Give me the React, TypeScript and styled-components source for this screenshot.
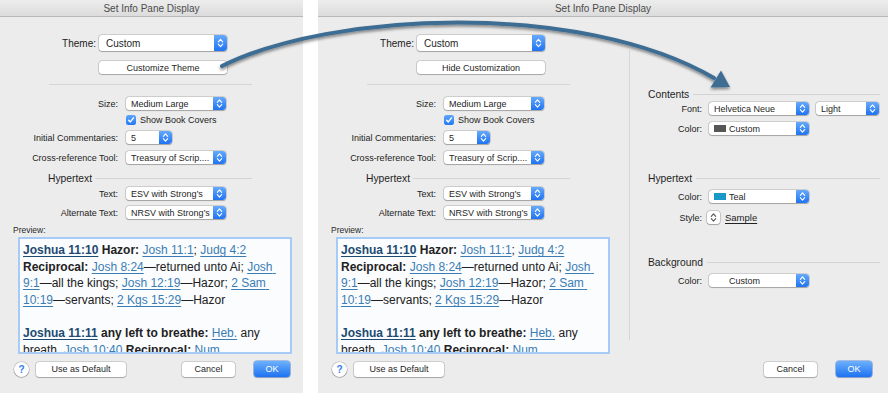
import React from 'react';
import styled, { createGlobalStyle } from 'styled-components';

const GlobalStyle = createGlobalStyle`
  html, body { margin: 0; padding: 0; background: #ffffff; }
  body { font-family: "Liberation Sans", Arial, sans-serif; }
  * { box-sizing: border-box; }
`;

const Page = styled.div`
  position: relative;
  width: 888px;
  height: 393px;
  overflow: hidden;
  display: flex;
  gap: 15px;
  background: #ffffff;
`;

const Window = styled.div<{ $w: number }>`
  width: ${(p) => p.$w}px;
  height: 393px;
  flex: none;
  background: #ececec;
  display: flex;
  flex-direction: column;
  color: #222;
`;

const TitleBar = styled.div`
  height: 17px;
  flex: none;
  border-bottom: 1px solid #b8b8b8;
  background: linear-gradient(#ededed, #dcdcdc);
  display: flex;
  align-items: center;
  justify-content: center;
  font-size: 10px;
  color: #4b4b4b;
`;

const Main = styled.div`
  display: flex;
  align-items: flex-start;
`;

const LeftColumn = styled.div`
  width: 293px;
  flex: none;
  padding-left: 13px;
  display: flex;
  flex-direction: column;
`;

const ThemeGrid = styled.div`
  display: grid;
  grid-template-columns: 83px 128px;
  column-gap: 3px;
  row-gap: 10px;
  margin-top: 18px;
  align-items: center;
`;

const ThemeLabel = styled.div`
  font-size: 10px;
  text-align: right;
  white-space: nowrap;
`;

const HSep = styled.div<{ $ml: number; $mr: number; $mt: number }>`
  height: 1px;
  background: #d6d6d6;
  margin: ${(p) => p.$mt}px ${(p) => p.$mr}px 0 ${(p) => p.$ml}px;
`;

const Row = styled.div<{ $mt: number; $h?: number }>`
  display: grid;
  grid-template-columns: 105px auto;
  column-gap: 8px;
  align-items: center;
  justify-items: start;
  height: ${(p) => p.$h ?? 13}px;
  margin-top: ${(p) => p.$mt}px;
`;

const Label = styled.div`
  font-size: 9px;
  text-align: right;
  white-space: nowrap;
  justify-self: end;
  color: #222;
`;

const PopupBox = styled.div<{ $w: number; $h: number; $fs: number; $pl: number }>`
  width: ${(p) => p.$w}px;
  height: ${(p) => p.$h}px;
  display: flex;
  align-items: center;
  background: #ffffff;
  border-radius: 3px;
  box-shadow: 0 0 0 0.6px rgba(0, 0, 0, 0.22), 0 0.8px 1px rgba(0, 0, 0, 0.22);
  font-size: ${(p) => p.$fs}px;
  padding-left: ${(p) => p.$pl}px;
  color: #262626;
  overflow: hidden;
`;

const PopupText = styled.span`
  flex: 1;
  white-space: nowrap;
  overflow: hidden;
`;

const Stepper = styled.div`
  width: 13px;
  height: 100%;
  flex: none;
  background: linear-gradient(#66aafc, #1f73f2);
  border-radius: 0 3px 3px 0;
  display: flex;
  align-items: center;
  justify-content: center;
`;

const Swatch = styled.span<{ $c: string }>`
  width: 12px;
  height: 7px;
  flex: none;
  background: ${(p) => p.$c};
  margin-right: 3px;
`;

const Chevrons = ({ h, color }: { h: number; color: string }) => {
  const m = h / 2;
  return (
    <svg width="9" height={h} viewBox={`0 0 9 ${h}`}>
      <path
        d={`M2.3 ${m - 1.2} L4.5 ${m - 3.6} L6.7 ${m - 1.2} M2.3 ${m + 1.2} L4.5 ${m + 3.6} L6.7 ${m + 1.2}`}
        fill="none"
        stroke={color}
        strokeWidth="1.1"
        strokeLinecap="round"
        strokeLinejoin="round"
      />
    </svg>
  );
};

const Popup = ({
  w,
  text,
  big,
  swatch,
}: {
  w: number;
  text: string;
  big?: boolean;
  swatch?: string;
}) => (
  <PopupBox $w={w} $h={big ? 16 : 13} $fs={big ? 10 : 9} $pl={big ? 7 : 5}>
    {swatch && <Swatch $c={swatch} />}
    <PopupText>{text}</PopupText>
    <Stepper>
      <Chevrons h={big ? 16 : 13} color="#ffffff" />
    </Stepper>
  </PopupBox>
);

const Button = styled.div<{ $w: number; $h?: number; $primary?: boolean; $ml?: number }>`
  width: ${(p) => p.$w}px;
  height: ${(p) => p.$h ?? 15}px;
  margin-left: ${(p) => p.$ml ?? 0}px;
  flex: none;
  display: flex;
  align-items: center;
  justify-content: center;
  border-radius: 3px;
  font-size: 9px;
  white-space: nowrap;
  background: ${(p) => (p.$primary ? 'linear-gradient(#6db1fc, #1e72f1)' : '#ffffff')};
  color: ${(p) => (p.$primary ? '#ffffff' : '#262626')};
  box-shadow: ${(p) =>
    p.$primary
      ? '0 0 0 0.6px rgba(20, 90, 210, 0.6), 0 0.8px 1px rgba(0,0,0,0.2)'
      : '0 0 0 0.6px rgba(0, 0, 0, 0.22), 0 0.8px 1px rgba(0, 0, 0, 0.2)'};
`;

const CheckWrap = styled.div`
  display: flex;
  align-items: center;
  gap: 4px;
  font-size: 9px;
  white-space: nowrap;
`;

const CheckBox = styled.span`
  width: 10px;
  height: 10px;
  border-radius: 2.5px;
  background: linear-gradient(#5fa6fb, #2479f3);
  display: flex;
  align-items: center;
  justify-content: center;
`;

const HeadingRow = styled.div<{ $mt: number; $pl: number; $mr: number; $gap: number }>`
  display: flex;
  align-items: center;
  height: 12px;
  margin-top: ${(p) => p.$mt}px;
  padding-left: ${(p) => p.$pl}px;
  margin-right: ${(p) => p.$mr}px;
  gap: ${(p) => p.$gap}px;
`;

const HeadingText = styled.span`
  font-size: 10.3px;
  color: #1e1e1e;
  white-space: nowrap;
`;

const HeadingLine = styled.span`
  flex: 1;
  height: 1px;
  background: #d4d4d4;
`;

const PreviewLabel = styled.div`
  font-size: 8.5px;
  height: 10px;
  line-height: 10px;
  margin-top: 6px;
  color: #2a2a2a;
`;

const PreviewBox = styled.div`
  width: 274px;
  height: 117px;
  margin: 2px 0 2px 5px;
  border: 2px solid #a7cbf7;
  background: #fbfcfe;
  padding: 3px 3px 0;
  overflow: hidden;
  font-family: "Liberation Sans", Arial, sans-serif;
  font-size: 12px;
  line-height: 16.7px;
  color: #202020;
`;

const PLine = styled.div`
  white-space: nowrap;
  height: 16.7px;
`;

const Ref = styled.span`
  color: #3a7cb4;
  text-decoration: underline;
  text-decoration-thickness: 1px;
  text-underline-offset: 2px;
`;

const HeadRef = styled.span`
  color: #1c4a72;
  font-weight: bold;
  text-decoration: underline;
  text-decoration-thickness: 1px;
  text-underline-offset: 2px;
`;

const B = styled.span`
  font-weight: bold;
  color: #222;
`;

const Footer = styled.div<{ $pr: number }>`
  display: flex;
  align-items: center;
  height: 16px;
  margin-top: 5px;
  padding: 0 ${(p) => p.$pr}px 0 14px;
`;

const Help = styled.div`
  width: 15px;
  height: 15px;
  border-radius: 50%;
  background: #ffffff;
  box-shadow: 0 0 0 0.6px rgba(0, 0, 0, 0.25), 0 0.8px 1px rgba(0, 0, 0, 0.2);
  display: flex;
  align-items: center;
  justify-content: center;
  color: #2f7ff1;
  font-size: 10px;
  font-weight: bold;
`;

const Spacer = styled.div`
  flex: 1;
`;

const VDivider = styled.div`
  width: 1px;
  height: 290px;
  margin: 33px 0 0 18px;
  background: #d6d6d6;
  flex: none;
`;

const RightPane = styled.div`
  flex: 1;
  padding: 71px 8px 0 18px;
  display: flex;
  flex-direction: column;
`;

const RRow = styled.div<{ $mt: number }>`
  display: flex;
  align-items: center;
  height: 13px;
  margin-top: ${(p) => p.$mt}px;
`;

const RLabel = styled.div`
  width: 54px;
  margin-right: 7px;
  font-size: 9px;
  text-align: right;
  white-space: nowrap;
  flex: none;
`;

const PopupGap = styled.span`
  width: 7px;
  flex: none;
`;

const SmallStepper = styled.div`
  width: 13px;
  height: 13px;
  margin-left: -2px;
  border-radius: 3px;
  background: #ffffff;
  box-shadow: 0 0 0 0.6px rgba(0, 0, 0, 0.25), 0 0.8px 1px rgba(0, 0, 0, 0.2);
  display: flex;
  align-items: center;
  justify-content: center;
`;

const SampleLink = styled.span`
  font-size: 9.5px;
  margin-left: 5px;
  color: #222;
  text-decoration: underline;
  text-underline-offset: 1.5px;
`;

const Overlay = styled.svg`
  position: absolute;
  left: 0;
  top: 0;
  pointer-events: none;
`;

const PreviewContent = () => (
  <PreviewBox>
    <PLine>
      <HeadRef>Joshua 11:10</HeadRef> <B>Hazor:</B> <Ref>Josh 11:1</Ref>; <Ref>Judg 4:2</Ref>
    </PLine>
    <PLine>
      <B>Reciprocal:</B> <Ref>Josh 8:24</Ref>—returned unto Ai; <Ref>Josh{'\u00a0'}</Ref>
    </PLine>
    <PLine>
      <Ref>9:1</Ref>—all the kings; <Ref>Josh 12:19</Ref>—Hazor; <Ref>2 Sam{'\u00a0'}</Ref>
    </PLine>
    <PLine>
      <Ref>10:19</Ref>—servants; <Ref>2 Kgs 15:29</Ref>—Hazor
    </PLine>
    <PLine>{'\u00a0'}</PLine>
    <PLine>
      <HeadRef>Joshua 11:11</HeadRef> <B>any left to breathe:</B> <Ref>Heb.</Ref> any
    </PLine>
    <PLine>
      breath. <Ref>Josh 10:40</Ref> <B>Reciprocal:</B> <Ref>Num</Ref>
    </PLine>
  </PreviewBox>
);

const CheckMark = () => (
  <svg width="8" height="8" viewBox="0 0 8 8">
    <path d="M1.6 4.2 L3.3 5.9 L6.5 1.9" fill="none" stroke="#fff" strokeWidth="1.4" strokeLinecap="round" strokeLinejoin="round" />
  </svg>
);

const Left = ({ buttonText }: { buttonText: string }) => (
  <LeftColumn>
    <ThemeGrid>
      <ThemeLabel>Theme:</ThemeLabel>
      <Popup w={128} text="Custom" big />
      <span />
      <Button $w={128} $h={13}>{buttonText}</Button>
    </ThemeGrid>
    <HSep $ml={36} $mr={41} $mt={10} />
    <Row $mt={12}>
      <Label>Size:</Label>
      <Popup w={100} text="Medium Large" />
    </Row>
    <Row $mt={5} $h={10}>
      <span />
      <CheckWrap>
        <CheckBox>
          <CheckMark />
        </CheckBox>
        Show Book Covers
      </CheckWrap>
    </Row>
    <Row $mt={6}>
      <Label>Initial Commentaries:</Label>
      <Popup w={46} text="5" />
    </Row>
    <Row $mt={7}>
      <Label>Cross-reference Tool:</Label>
      <Popup w={100} text="Treasury of Scrip...." />
    </Row>
    <HeadingRow $mt={8} $pl={35} $mr={41} $gap={3}>
      <HeadingText>Hypertext</HeadingText>
      <HeadingLine />
    </HeadingRow>
    <Row $mt={3}>
      <Label>Text:</Label>
      <Popup w={100} text="ESV with Strong’s" />
    </Row>
    <Row $mt={6}>
      <Label>Alternate Text:</Label>
      <Popup w={100} text="NRSV with Strong’s" />
    </Row>
    <PreviewLabel>Preview:</PreviewLabel>
    <PreviewContent />
  </LeftColumn>
);

const FooterBar = ({ pr }: { pr: number }) => (
  <Footer $pr={pr}>
    <Help>?</Help>
    <Button $w={90} $ml={7}>Use as Default</Button>
    <Spacer />
    <Button $w={53}>Cancel</Button>
    <Button $w={36} $h={16} $primary $ml={19}>OK</Button>
  </Footer>
);

const Arrow = () => (
  <Overlay width="888" height="393" viewBox="0 0 888 393">
    <defs>
      <filter id="arrowShadow" x="-10%" y="-50%" width="120%" height="200%">
        <feDropShadow dx="0" dy="2" stdDeviation="1.4" floodColor="#000" floodOpacity="0.45" />
      </filter>
    </defs>
    <g filter="url(#arrowShadow)">
      <path
        d="M222 66 C 330 12, 580 0, 714 78"
        fill="none"
        stroke="#3e6d93"
        strokeWidth="4"
        strokeLinecap="round"
      />
      <polygon points="710.5,87.5 721,70.5 730,87" fill="#3e6d93" />
    </g>
  </Overlay>
);

export default function App() {
  return (
    <>
      <GlobalStyle />
      <Page>
        <Window $w={303}>
          <TitleBar>Set Info Pane Display</TitleBar>
          <Main>
            <Left buttonText="Customize Theme" />
          </Main>
          <FooterBar pr={13} />
        </Window>
        <Window $w={570}>
          <TitleBar>Set Info Pane Display</TitleBar>
          <Main>
            <Left buttonText="Hide Customization" />
            <VDivider />
            <RightPane>
              <HeadingRow $mt={0} $pl={0} $mr={0} $gap={4}>
                <HeadingText>Contents</HeadingText>
                <HeadingLine />
              </HeadingRow>
              <RRow $mt={2}>
                <RLabel>Font:</RLabel>
                <Popup w={100} text="Helvetica Neue" />
                <PopupGap />
                <Popup w={63} text="Light" />
              </RRow>
              <RRow $mt={7}>
                <RLabel>Color:</RLabel>
                <Popup w={100} text="Custom" swatch="#565656" />
              </RRow>
              <HeadingRow $mt={37} $pl={0} $mr={0} $gap={4}>
                <HeadingText>Hypertext</HeadingText>
                <HeadingLine />
              </HeadingRow>
              <RRow $mt={6}>
                <RLabel>Color:</RLabel>
                <Popup w={100} text="Teal" swatch="#1a98c8" />
              </RRow>
              <RRow $mt={8}>
                <RLabel>Style:</RLabel>
                <SmallStepper>
                  <Chevrons h={13} color="#555" />
                </SmallStepper>
                <SampleLink>Sample</SampleLink>
              </RRow>
              <HeadingRow $mt={32} $pl={0} $mr={0} $gap={4}>
                <HeadingText>Background</HeadingText>
                <HeadingLine />
              </HeadingRow>
              <RRow $mt={6}>
                <RLabel>Color:</RLabel>
                <Popup w={100} text="Custom" swatch="#ffffff" />
              </RRow>
            </RightPane>
          </Main>
          <FooterBar pr={16} />
        </Window>
        <Arrow />
      </Page>
    </>
  );
}
